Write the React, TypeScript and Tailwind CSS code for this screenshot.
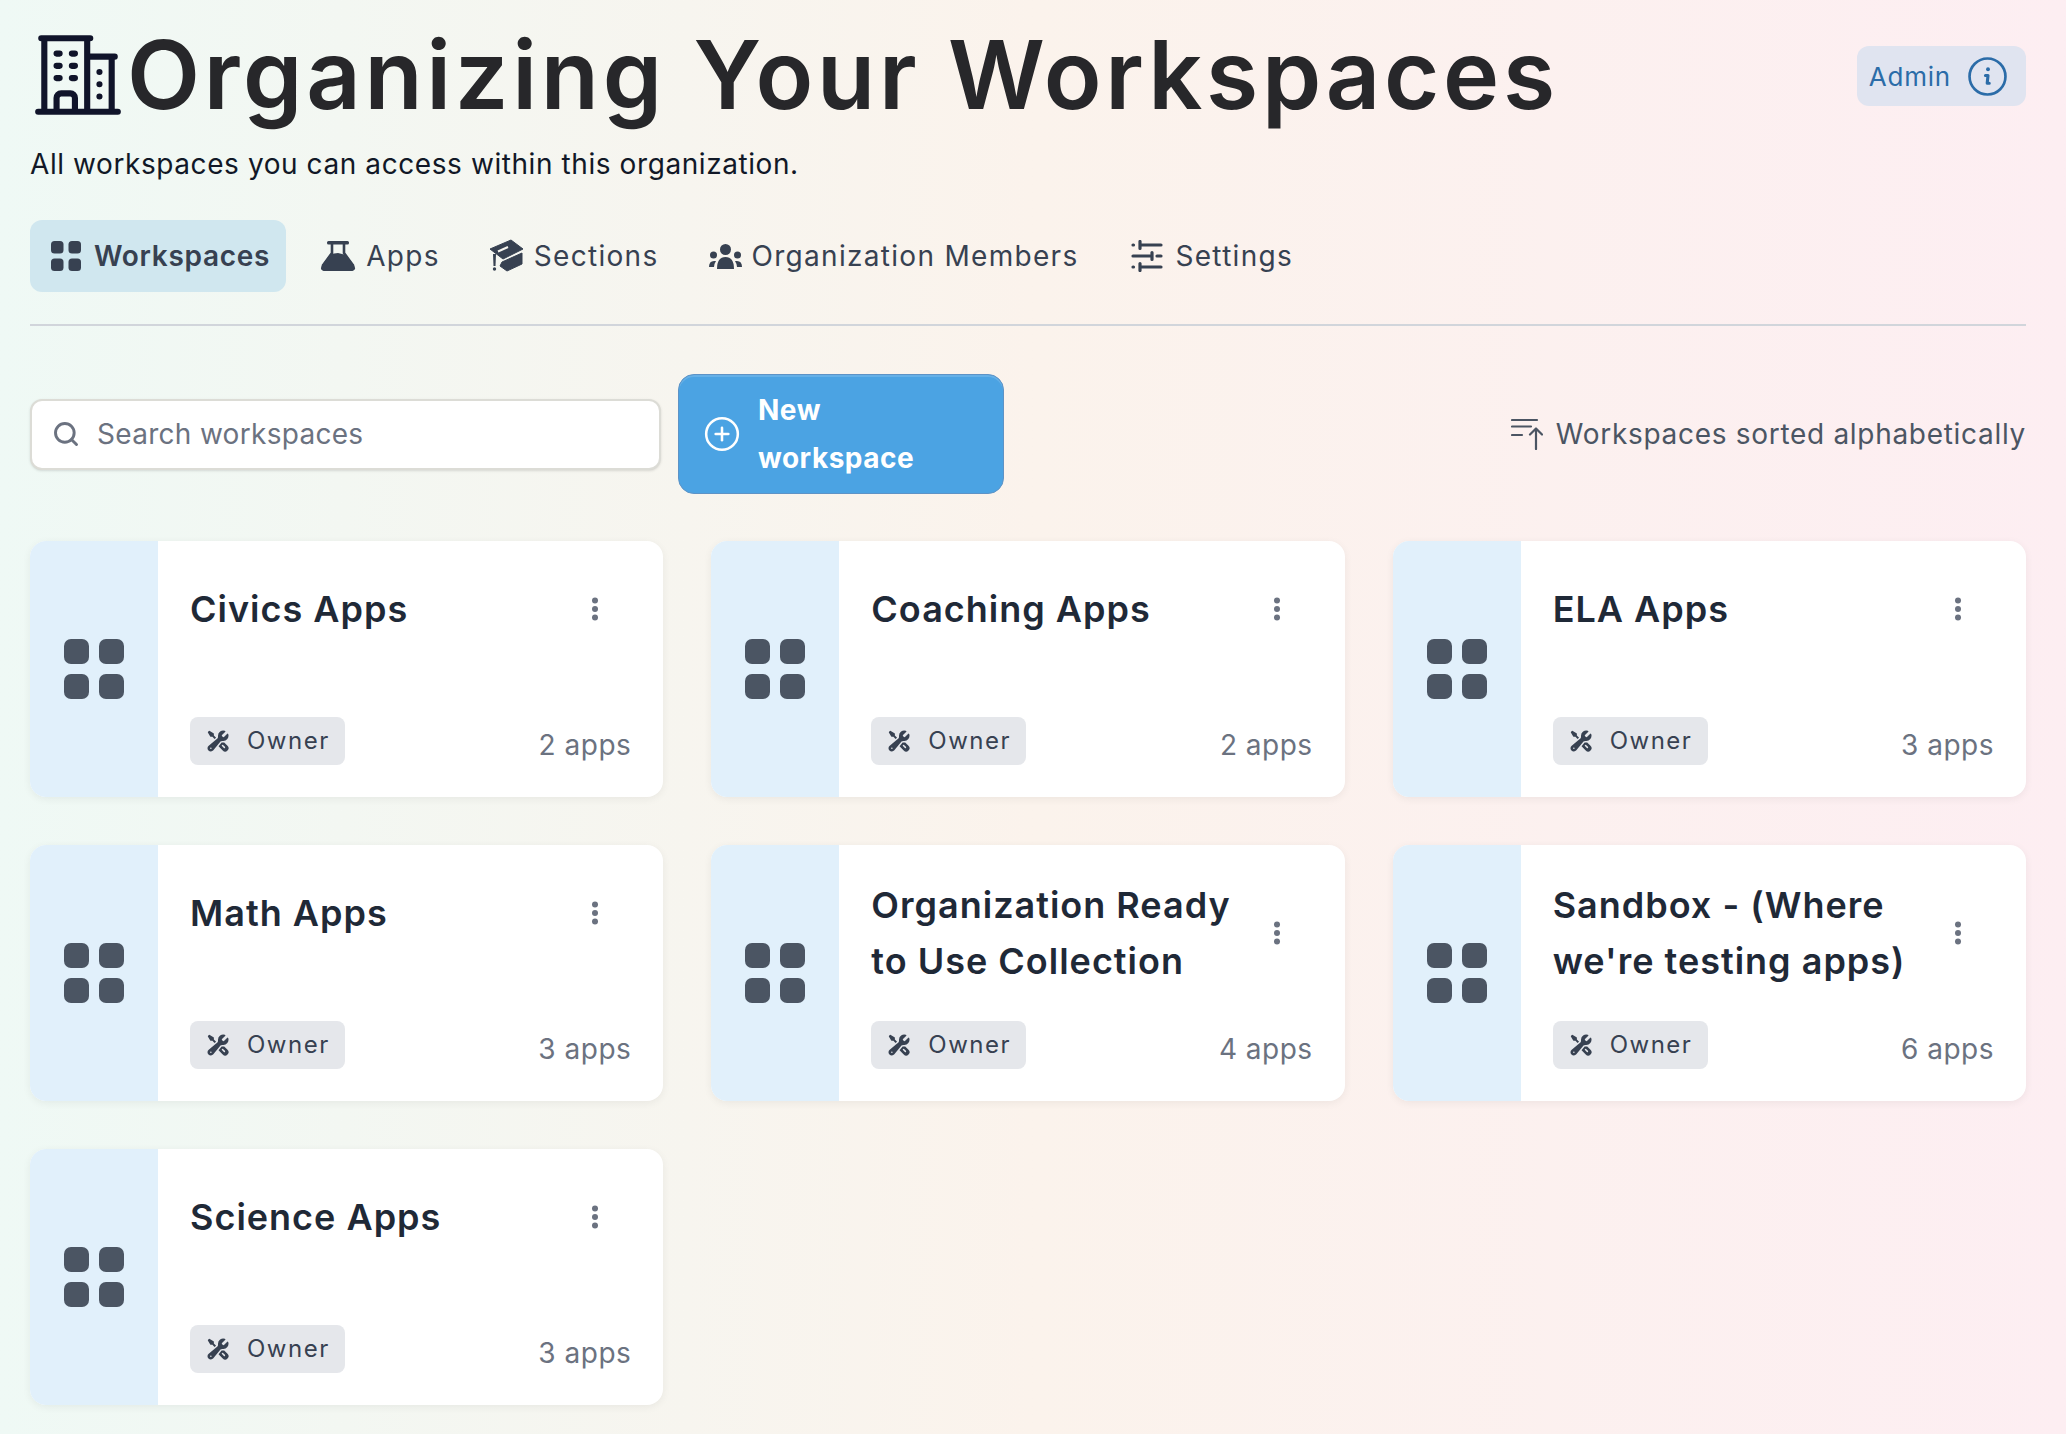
import { HiOutlineBuildingOffice2, HiWrenchScrewdriver } from "react-icons/hi2";
import { CirclePlus, Search } from "lucide-react";

const workspaces = [
  { name: "Civics Apps", apps: "2 apps" },
  { name: "Coaching Apps", apps: "2 apps" },
  { name: "ELA Apps", apps: "3 apps" },
  { name: "Math Apps", apps: "3 apps" },
  { name: "Organization Ready to Use Collection", apps: "4 apps" },
  { name: "Sandbox - (Where we're testing apps)", apps: "6 apps" },
  { name: "Science Apps", apps: "3 apps" },
];

function GridIcon({ className }: { className: string }) {
  return (
    <svg viewBox="0 0 60 60" className={className} fill="currentColor">
      <rect x="0" y="0" width="25" height="25" rx="7" />
      <rect x="35" y="0" width="25" height="25" rx="7" />
      <rect x="0" y="35" width="25" height="25" rx="7" />
      <rect x="35" y="35" width="25" height="25" rx="7" />
    </svg>
  );
}

function FlaskIcon() {
  return (
    <svg viewBox="0 0 36 30" className="h-[30px] w-[36px]">
      <rect x="7" y="0" width="22" height="3.5" rx="1.5" fill="#374151" />
      <path d="M12 3v9L2.5 25M24 3v9l9.5 13" fill="none" stroke="#374151" strokeWidth="2.6" />
      <path d="M10.5 13 18 12l8 2 8.5 11q2 5-4 5H5.5q-6 0-4-5z" fill="#374151" />
    </svg>
  );
}

function CapIcon() {
  return (
    <svg viewBox="0 0 34 34" className="h-[34px] w-[34px]">
      <path d="M0 10 21 1 33 10 13 20z" fill="#374151" strokeLinejoin="round" stroke="#374151" strokeWidth="1" />
      <path d="M8 12.5 18 8" stroke="#f7f5ef" strokeWidth="2" />
      <path d="M12 23 32 14V25L17 32 10 27z" fill="#374151" strokeLinejoin="round" stroke="#374151" strokeWidth="1" />
      <path d="M3 15h3l-.5 12h-2z" fill="#374151" />
      <circle cx="4.5" cy="30" r="1.7" fill="#374151" />
    </svg>
  );
}

function MembersIcon() {
  return (
    <svg viewBox="0 0 33 25" className="h-[25px] w-[33px]" fill="#374151">
      <circle cx="16.5" cy="5.5" r="5.5" />
      <path d="M8 25q0-12 8.5-12T25 25z" />
      <circle cx="4.5" cy="11" r="3.5" />
      <circle cx="28.5" cy="11" r="3.5" />
      <path d="M0 23q0-6 5-6h2q-2 3-2 6z" />
      <path d="M33 23q0-6-5-6h-2q2 3 2 6z" />
    </svg>
  );
}

function SlidersIcon() {
  return (
    <svg viewBox="0 0 32 32" className="mr-[2px] ml-[3px] h-[32px] w-[32px]" fill="none" stroke="#374151" strokeWidth="3.2" strokeLinecap="round">
      <path d="M2 5h.5M9 5h21M9 1.5v7" />
      <path d="M2 16h17M26 16h4M21 12.5v7" />
      <path d="M2 27h.5M9 27h21M9 23.5v7" />
    </svg>
  );
}

function SortIcon() {
  return (
    <svg viewBox="0 0 32 32" className="h-[32px] w-[32px]" fill="none" stroke="#4b5563" strokeWidth="2.2" strokeLinecap="round" strokeLinejoin="round">
      <path d="M1 2h25M1 8.5h19M1 17h10" />
      <path d="M25 31V10.5M19 16.5l6-6 6 6" />
    </svg>
  );
}

function InfoIcon() {
  return (
    <svg viewBox="0 0 38 38" className="h-[39px] w-[39px]" fill="none" stroke="#2b6ca8">
      <circle cx="19" cy="19" r="17.5" strokeWidth="2.6" />
      <circle cx="19.5" cy="12" r="1.9" fill="#2b6ca8" stroke="none" />
      <path d="M17 18h2.5l-.8 7.5 2 0" strokeWidth="3" strokeLinecap="round" strokeLinejoin="round" />
    </svg>
  );
}

function Kebab() {
  return (
    <svg viewBox="0 0 8 24" className="h-[24px] w-[8px]" fill="#6b7280">
      <circle cx="4" cy="3.5" r="3" />
      <circle cx="4" cy="12" r="3" />
      <circle cx="4" cy="20.5" r="3" />
    </svg>
  );
}

function Tab({ icon, label, active }: { icon: React.ReactNode; label: string; active?: boolean }) {
  return (
    <div
      className={
        active
          ? "flex h-[72px] items-center gap-[13px] rounded-xl bg-[#d0e7ef] pr-4 pl-[21px] text-[28px] font-semibold tracking-[0.7px] text-[#374151]"
          : "flex h-[72px] items-center gap-[10px] rounded-xl px-4 text-[28px] font-normal tracking-[1.3px] text-[#374151]"
      }
    >
      {icon}
      <span>{label}</span>
    </div>
  );
}

function WorkspaceCard({ name, apps }: { name: string; apps: string }) {
  return (
    <div className="flex h-[256px] overflow-hidden rounded-2xl bg-white shadow-[0_2px_8px_rgba(0,0,0,0.06)]">
      <div className="flex w-[128px] shrink-0 items-center justify-center bg-[#e1f0fb]">
        <GridIcon className="h-[60px] w-[60px] text-[#4b5563]" />
      </div>
      <div className="flex flex-1 flex-col justify-between px-[32px] pt-[32px] pb-[32px]">
        <div className="flex min-h-[72px] items-center">
          <h3 className="flex-1 text-[36px] leading-[56px] font-semibold tracking-[1px] text-[#1f2937]">{name}</h3>
          <div className="flex h-[72px] w-[72px] shrink-0 items-center justify-center">
            <Kebab />
          </div>
        </div>
        <div className="flex items-end justify-between">
          <div className="flex h-[48px] w-[155px] items-center gap-[17px] rounded-lg bg-[#e5e7eb] pl-4 text-[24px] tracking-[1.5px] text-[#374151]">
            <HiWrenchScrewdriver className="h-[24px] w-[24px]" />
            <span>Owner</span>
          </div>
          <span className="text-[28px] leading-[40px] tracking-[0.5px] text-[#6b7280]">{apps}</span>
        </div>
      </div>
    </div>
  );
}

export default function App() {
  return (
    <div className="min-h-[1434px] bg-gradient-to-r from-[#eff9f5] via-[#fbf3ec] to-[#fdeef2] pt-[20px] pr-[40px] pl-[30px] font-[Inter,sans-serif]">
      <header className="flex items-start justify-between">
        <div>
          <div className="flex h-[110px] items-center">
            <HiOutlineBuildingOffice2 className="-ml-[1px] h-[98px] w-[98px] shrink-0 text-[#10142a]" />
            <h1 className="text-[95px] leading-[110px] font-semibold tracking-[3.7px] whitespace-nowrap text-[#27272a]">
              Organizing Your Workspaces
            </h1>
          </div>
          <p className="mt-[17px] text-[28px] leading-[34px] tracking-[0.58px] text-[#111827]">
            All workspaces you can access within this organization.
          </p>
        </div>
        <div className="mt-[26px] flex h-[60px] items-center gap-[17px] rounded-xl bg-[#e0e4f0] pr-[19px] pl-[12px] text-[26px] tracking-[0.8px] text-[#2b6ca8]">
          <span>Admin</span>
          <InfoIcon />
        </div>
      </header>

      <nav className="mt-[39px] flex items-center gap-[18px] border-b-2 border-[#d1d5db] pb-[32px]">
        <Tab active icon={<GridIcon className="h-[30px] w-[30px]" />} label="Workspaces" />
        <Tab icon={<FlaskIcon />} label="Apps" />
        <Tab icon={<CapIcon />} label="Sections" />
        <Tab icon={<MembersIcon />} label="Organization Members" />
        <Tab icon={<SlidersIcon />} label="Settings" />
      </nav>

      <div className="mt-[48px] flex items-center justify-between">
        <div className="flex items-center gap-[17px]">
          <div className="flex h-[71px] w-[631px] items-center gap-[17px] rounded-xl border-2 border-[#dcdcd6] bg-white pl-[20px] text-[28px] tracking-[0.3px] text-[#6b7280] shadow-sm">
            <Search className="h-[28px] w-[28px]" strokeWidth={2.5} />
            <span>Search workspaces</span>
          </div>
          <button
            type="button"
            className="flex h-[120px] w-[326px] items-center gap-[17px] rounded-2xl border border-[#5e93c6] bg-[#4ba3e3] pl-[24px] text-left text-[28px] leading-[48px] font-bold tracking-[0.5px] text-white shadow-[inset_0_2px_0_rgba(255,255,255,0.15)]"
          >
            <CirclePlus className="h-[38px] w-[38px] shrink-0" strokeWidth={1.6} />
            <span>
              New
              <br />
              workspace
            </span>
          </button>
        </div>
        <div className="flex items-center gap-[13px] text-[28px] tracking-[0.7px] text-[#4b5563]">
          <SortIcon />
          <span>Workspaces sorted alphabetically</span>
        </div>
      </div>

      <div className="mt-[47px] grid grid-cols-3 gap-[48px]">
        {workspaces.map((w) => (
          <WorkspaceCard key={w.name} name={w.name} apps={w.apps} />
        ))}
      </div>
    </div>
  );
}
